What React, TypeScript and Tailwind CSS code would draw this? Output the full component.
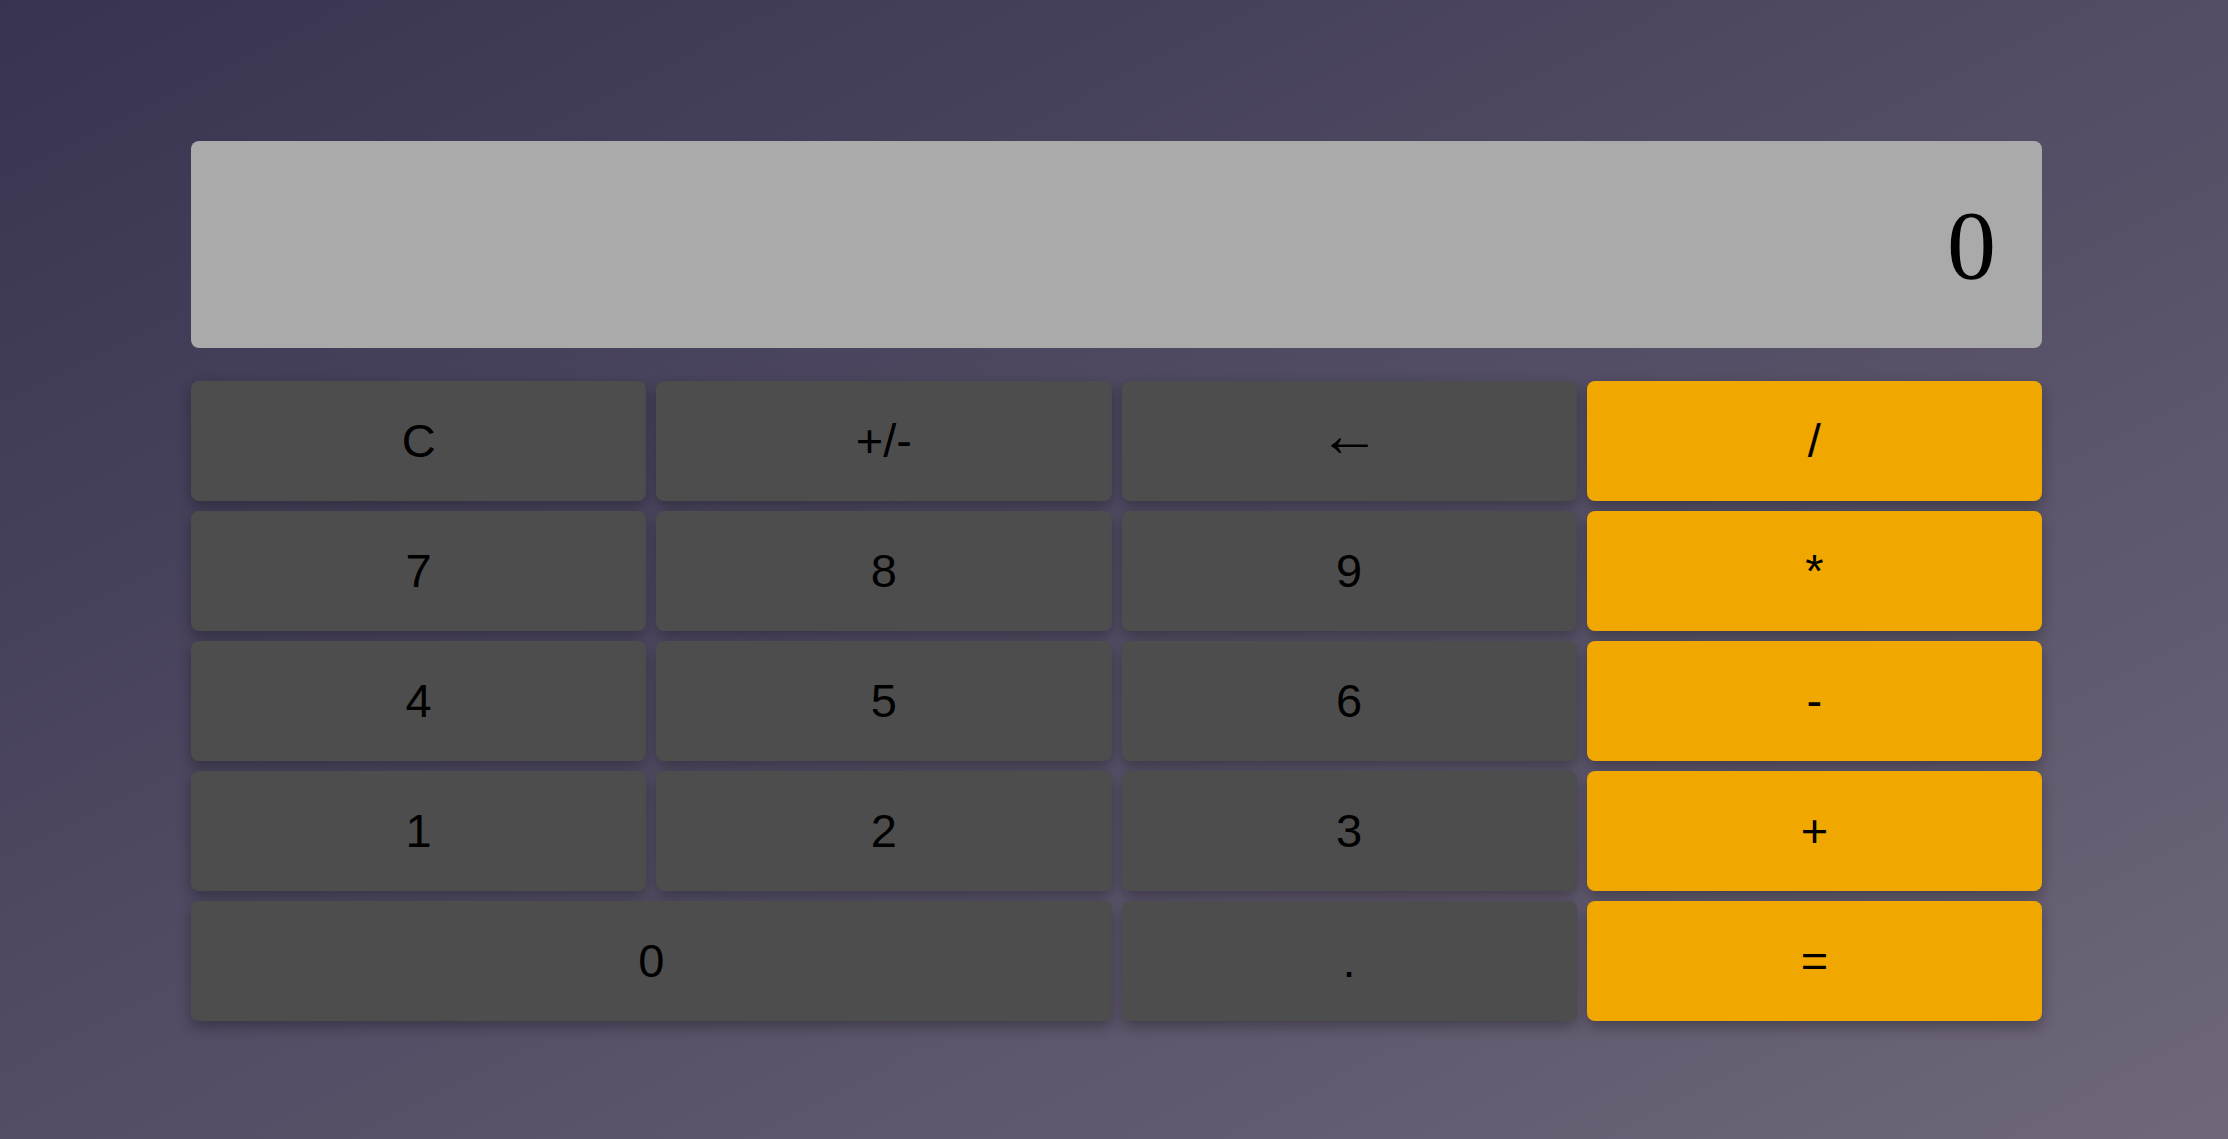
import { useState } from 'react';

type Key = {
  label: string;
  kind: 'num' | 'op';
  wide?: boolean;
};

const keys: Key[] = [
  { label: 'C', kind: 'num' },
  { label: '+/-', kind: 'num' },
  { label: '←', kind: 'num' },
  { label: '/', kind: 'op' },
  { label: '7', kind: 'num' },
  { label: '8', kind: 'num' },
  { label: '9', kind: 'num' },
  { label: '*', kind: 'op' },
  { label: '4', kind: 'num' },
  { label: '5', kind: 'num' },
  { label: '6', kind: 'num' },
  { label: '-', kind: 'op' },
  { label: '1', kind: 'num' },
  { label: '2', kind: 'num' },
  { label: '3', kind: 'num' },
  { label: '+', kind: 'op' },
  { label: '0', kind: 'num', wide: true },
  { label: '.', kind: 'num' },
  { label: '=', kind: 'op' },
];

export default function App() {
  const [display, setDisplay] = useState('0');
  const [prev, setPrev] = useState<number | null>(null);
  const [op, setOp] = useState<string | null>(null);
  const [fresh, setFresh] = useState(false);

  const calc = (a: number, b: number, o: string) => {
    if (o === '+') return a + b;
    if (o === '-') return a - b;
    if (o === '*') return a * b;
    if (o === '/') return b === 0 ? 0 : a / b;
    return b;
  };

  const press = (label: string) => {
    if (/^[0-9]$/.test(label)) {
      setDisplay(fresh || display === '0' ? label : display + label);
      setFresh(false);
      return;
    }
    if (label === '.') {
      if (fresh) { setDisplay('0.'); setFresh(false); return; }
      if (!display.includes('.')) setDisplay(display + '.');
      return;
    }
    if (label === 'C') { setDisplay('0'); setPrev(null); setOp(null); return; }
    if (label === '+/-') { setDisplay(String(-parseFloat(display))); return; }
    if (label === '←') { setDisplay(display.length > 1 ? display.slice(0, -1) : '0'); return; }
    const cur = parseFloat(display);
    if (label === '=') {
      if (prev !== null && op) setDisplay(String(calc(prev, cur, op)));
      setPrev(null);
      setOp(null);
      setFresh(true);
      return;
    }
    // operator
    const next = prev !== null && op && !fresh ? calc(prev, cur, op) : cur;
    setPrev(next);
    setDisplay(String(next));
    setOp(label);
    setFresh(true);
  };

  return (
    <div className="min-h-[1139px] w-full bg-gradient-to-br from-[#383350] to-[#6f6779] pt-[141px]">
      <div className="ml-[191px] w-[1851px]">
        <div className="flex h-[207px] items-center justify-end rounded-lg bg-[#aaaaaa] pr-[46px] font-['Liberation_Serif',serif] text-[98px] leading-none text-black">
          {display}
        </div>

        <div className="mt-[33px] grid grid-cols-4 gap-[10px]">
          {keys.map((k) => (
            <button
              key={k.label}
              onClick={() => press(k.label)}
              className={`flex h-[120px] items-center justify-center rounded-lg text-[47px] text-black shadow-[0_6px_14px_rgba(0,0,0,0.3)] ${
                k.label === '←' ? "font-['Liberation_Serif',serif] text-[62px]" : "font-['Liberation_Sans',Arial,sans-serif]"
              } ${k.kind === 'op' ? 'bg-[#f0a800]' : 'bg-[#4d4d4d]'} ${k.wide ? 'col-span-2' : ''}`}
            >
              <span className={k.label === '←' ? '-translate-y-[6px]' : ''}>{k.label}</span>
            </button>
          ))}
        </div>
      </div>
    </div>
  );
}
